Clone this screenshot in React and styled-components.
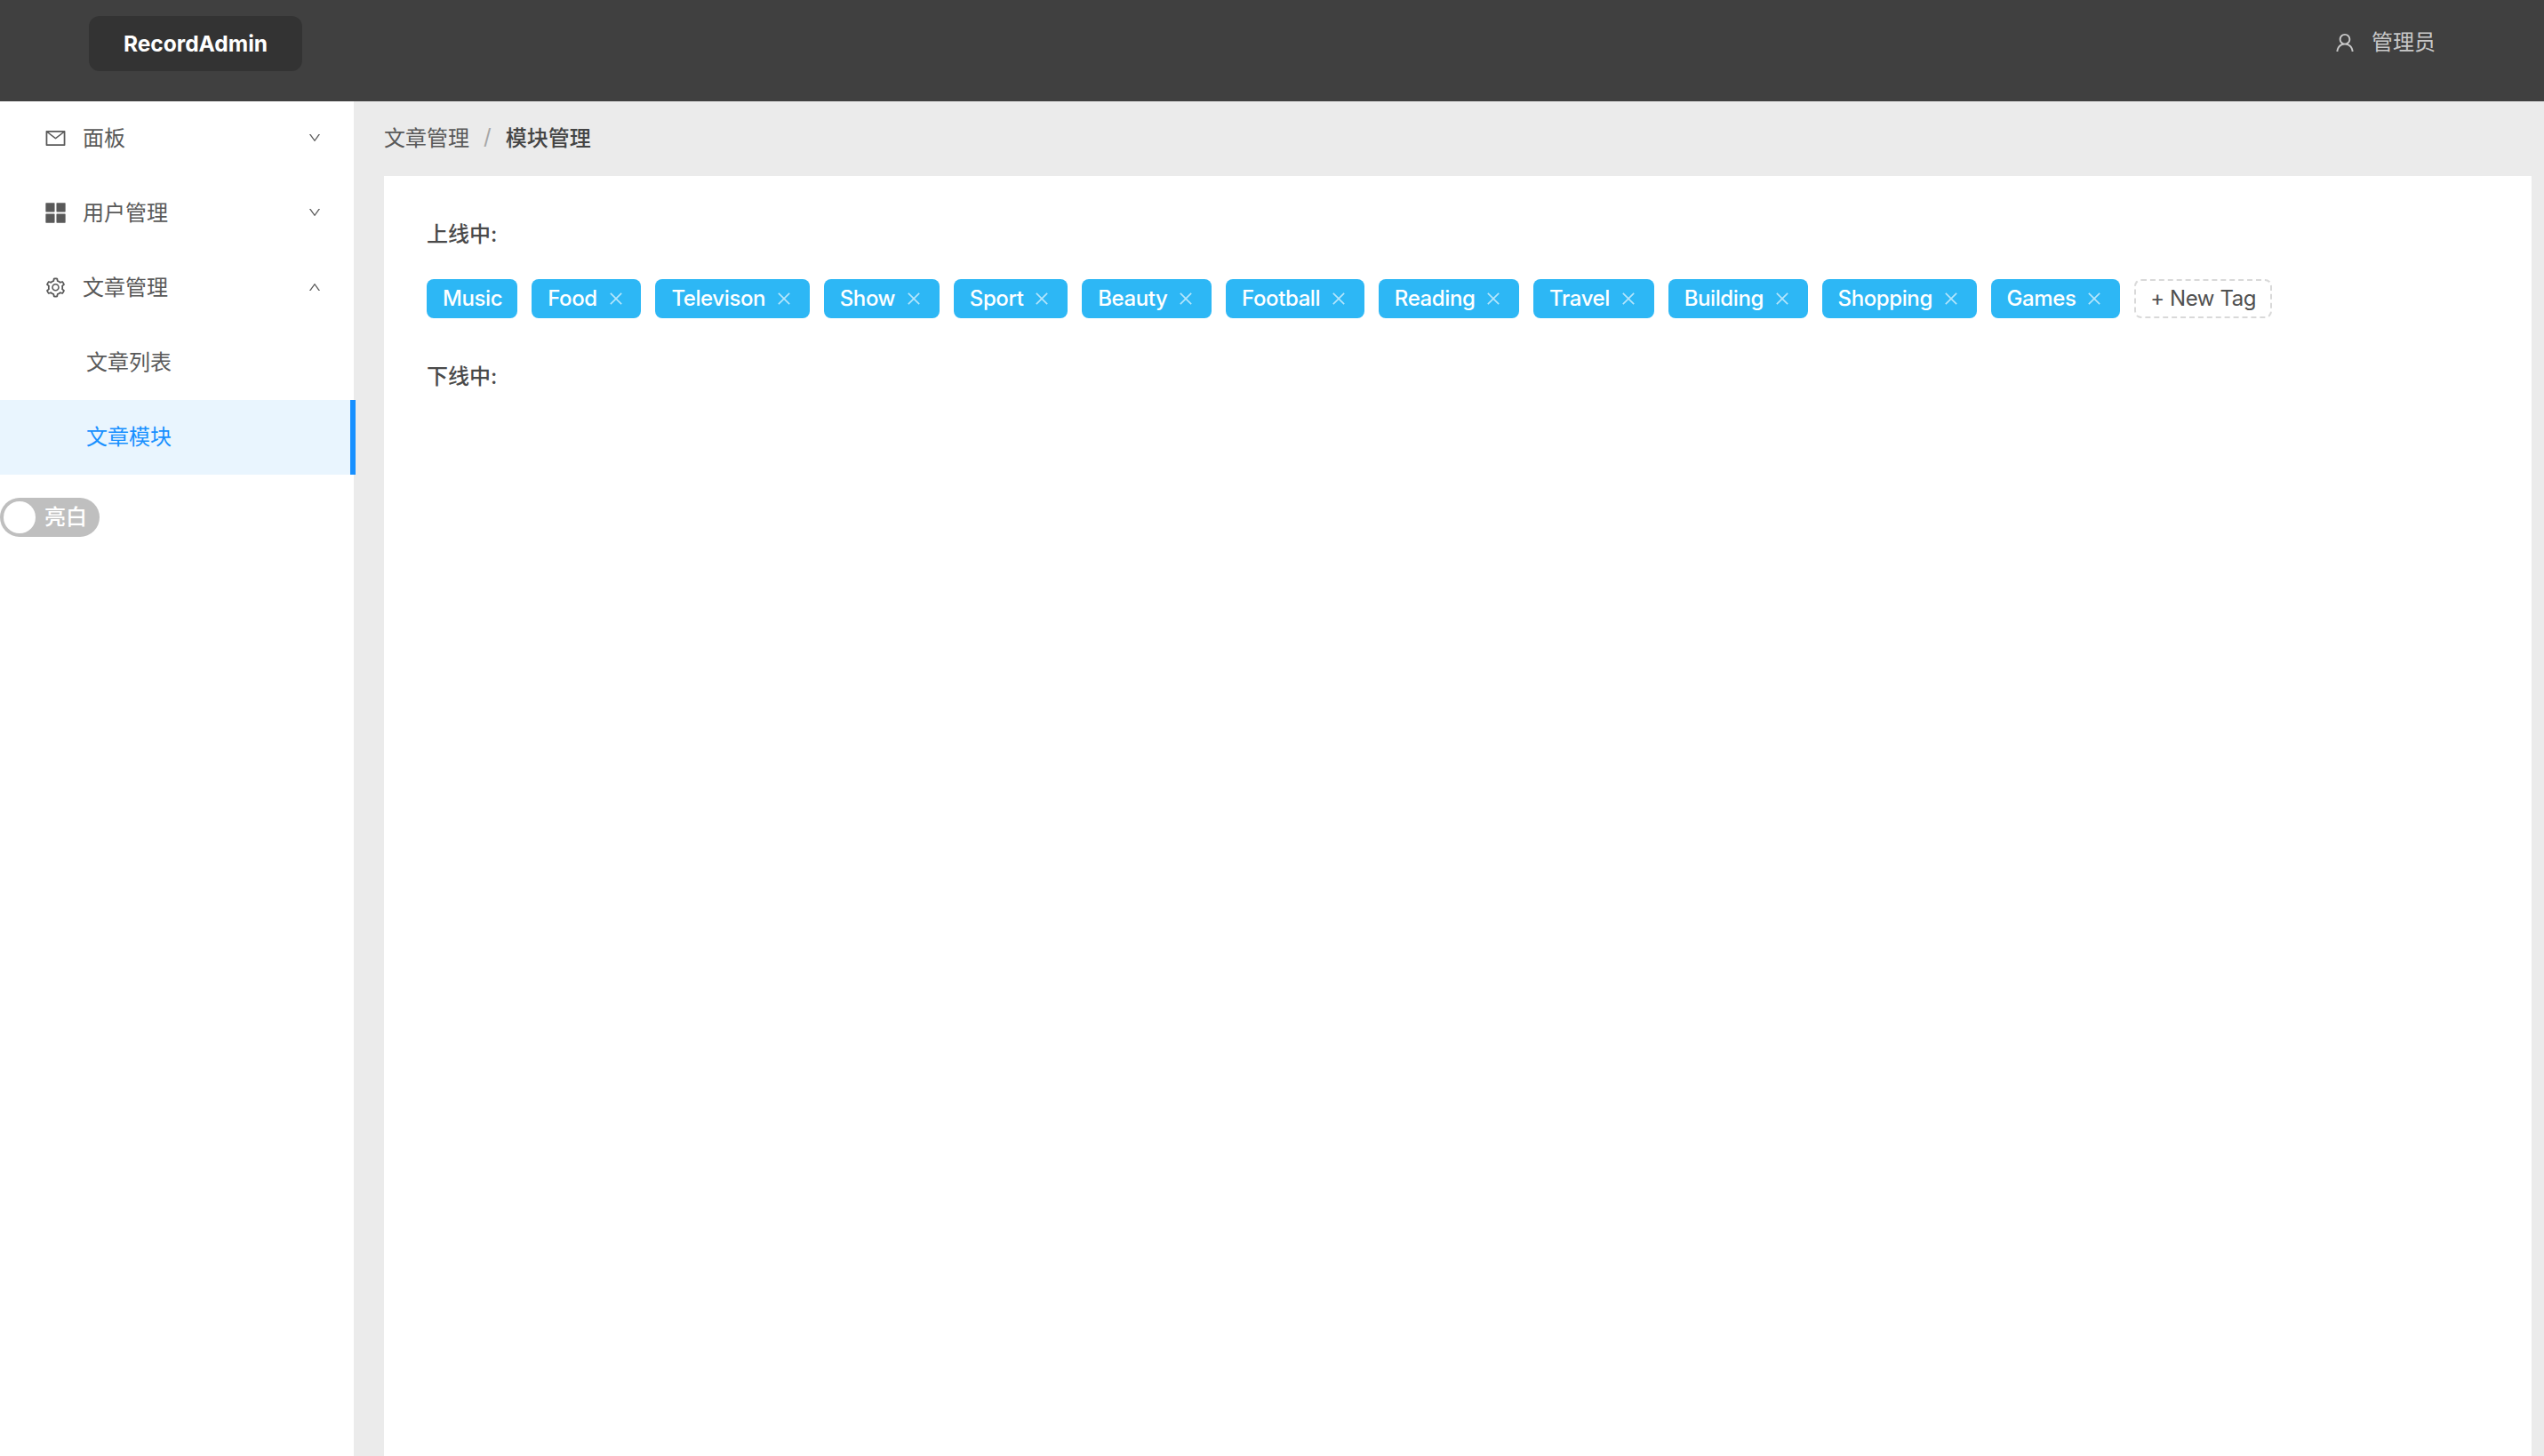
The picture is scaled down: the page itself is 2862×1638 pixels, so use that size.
import React from "react";
import styled, { createGlobalStyle } from "styled-components";
import {
  AiOutlineMail,
  AiFillAppstore,
  AiOutlineSetting,
  AiOutlineUser,
  AiOutlineDown,
  AiOutlineUp,
  AiOutlineClose,
} from "react-icons/ai";

const GlobalStyle = createGlobalStyle`
  * { box-sizing: border-box; }
  html, body { margin: 0; padding: 0; height: 100%; }
  body {
    font-family: Inter, "Noto Sans CJK SC", sans-serif;
    font-size: 24px;
    color: #595959;
    background: #ebebeb;
  }
`;

const Page = styled.div`
  display: flex;
  flex-direction: column;
  height: 100vh;
  overflow: hidden;
`;

const Header = styled.header`
  display: flex;
  justify-content: space-between;
  flex: 0 0 114px;
  background: #404040;
  padding: 18px 122px 0 100px;
`;

const Logo = styled.div`
  display: flex;
  align-items: center;
  justify-content: center;
  width: 240px;
  height: 62px;
  border-radius: 12px;
  background: #333333;
  color: #ffffff;
  font-size: 24.5px;
  font-weight: 700;
`;

const User = styled.div`
  display: flex;
  align-items: center;
  gap: 17px;
  height: 58px;
  padding-top: 2px;
  color: #c8c8c8;
  font-size: 24px;
  line-height: 1;

  svg {
    font-size: 26px;
  }
`;

const Body = styled.div`
  display: flex;
  flex: 1;
  min-height: 0;
`;

const Sidebar = styled.aside`
  flex: 0 0 400px;
  background: #ffffff;
  border-right: 2px solid #ebebeb;
`;

const MenuItem = styled.div`
  display: flex;
  align-items: center;
  height: 84px;
  padding: 0 36px 2px 50px;
  color: #595959;

  svg.lead {
    font-size: 25px;
    margin-right: 18px;
  }

  svg.grid {
    font-size: 31px;
    margin: 0 15px 0 -3px;
  }

  span {
    flex: 1;
    margin-bottom: 4px;
  }

  svg.arrow {
    font-size: 16px;
  }
`;

const SubItem = styled.div`
  position: relative;
  display: flex;
  align-items: center;
  height: 84px;
  margin-right: -2px;
  padding: 0 0 6px 97px;
  color: ${(p) => (p.$active ? "#1890ff" : "#595959")};
  background: ${(p) => (p.$active ? "#e9f5fe" : "transparent")};

  &::after {
    content: "";
    display: ${(p) => (p.$active ? "block" : "none")};
    position: absolute;
    top: 0;
    right: 0;
    bottom: 0;
    width: 6px;
    background: #1890ff;
  }
`;

const Toggle = styled.div`
  display: flex;
  align-items: center;
  width: 112px;
  height: 44px;
  margin-top: 26px;
  padding: 0 0 5px 4px;
  border-radius: 22px;
  background: #bfbfbf;
  color: #ffffff;
  font-size: 24px;
  font-weight: 500;
`;

const Knob = styled.div`
  width: 36px;
  height: 36px;
  margin: 5px 10px 0 0;
  border-radius: 50%;
  background: #ffffff;
`;

const Main = styled.main`
  display: flex;
  flex-direction: column;
  flex: 1;
  min-width: 0;
  padding: 0 14px 0 32px;
  background: #ebebeb;
`;

const Breadcrumb = styled.nav`
  display: flex;
  align-items: center;
  flex: 0 0 84px;
  padding-bottom: 6px;
`;

const Crumb = styled.span`
  color: ${(p) => (p.$current ? "#444444" : "#595959")};
  font-weight: ${(p) => (p.$current ? 500 : 400)};
`;

const Slash = styled.span`
  margin: 0 16px;
  color: #a6a6a6;
`;

const Content = styled.section`
  flex: 1;
  padding: 48px 48px 0;
  background: #ffffff;
`;

const Label = styled.div`
  height: 34px;
  line-height: 35px;
  color: #4a4a4a;
  font-weight: 500;
  margin-top: ${(p) => p.$top || 0}px;
`;

const TagRow = styled.div`
  display: flex;
  gap: 16px;
  margin-top: 34px;
`;

const Tag = styled.div`
  display: flex;
  align-items: center;
  gap: 11px;
  height: 44px;
  padding: 0 ${(p) => (p.$closable ? 18.7 : 17)}px 2px 18px;
  border-radius: 8px;
  background: #2db7f5;
  color: #ffffff;
  font-weight: 500;
  letter-spacing: -0.4px;

  svg {
    font-size: 20px;
    margin-top: 2px;
    color: rgba(255, 255, 255, 0.65);
  }
`;

const NewTag = styled.div`
  display: flex;
  align-items: center;
  height: 44px;
  padding: 0 16px 2px;
  border: 2px dashed #d9d9d9;
  border-radius: 8px;
  background: #ffffff;
  color: #505050;
  letter-spacing: -0.4px;
`;

const tags = [
  "Food",
  "Televison",
  "Show",
  "Sport",
  "Beauty",
  "Football",
  "Reading",
  "Travel",
  "Building",
  "Shopping",
  "Games",
];

export default function App() {
  return (
    <Page>
      <GlobalStyle />
      <Header>
        <Logo>RecordAdmin</Logo>
        <User>
          <AiOutlineUser />
          管理员
        </User>
      </Header>
      <Body>
        <Sidebar>
          <MenuItem>
            <AiOutlineMail className="lead" />
            <span>面板</span>
            <AiOutlineDown className="arrow" />
          </MenuItem>
          <MenuItem>
            <AiFillAppstore className="grid" />
            <span>用户管理</span>
            <AiOutlineDown className="arrow" />
          </MenuItem>
          <MenuItem>
            <AiOutlineSetting className="lead" />
            <span>文章管理</span>
            <AiOutlineUp className="arrow" />
          </MenuItem>
          <SubItem>文章列表</SubItem>
          <SubItem $active>文章模块</SubItem>
          <Toggle>
            <Knob />
            亮白
          </Toggle>
        </Sidebar>
        <Main>
          <Breadcrumb>
            <Crumb>文章管理</Crumb>
            <Slash>/</Slash>
            <Crumb $current>模块管理</Crumb>
          </Breadcrumb>
          <Content>
            <Label>上线中:</Label>
            <TagRow>
              <Tag>Music</Tag>
              {tags.map((t) => (
                <Tag key={t} $closable>
                  {t}
                  <AiOutlineClose />
                </Tag>
              ))}
              <NewTag>+ New Tag</NewTag>
            </TagRow>
            <Label $top={48}>下线中:</Label>
          </Content>
        </Main>
      </Body>
    </Page>
  );
}
